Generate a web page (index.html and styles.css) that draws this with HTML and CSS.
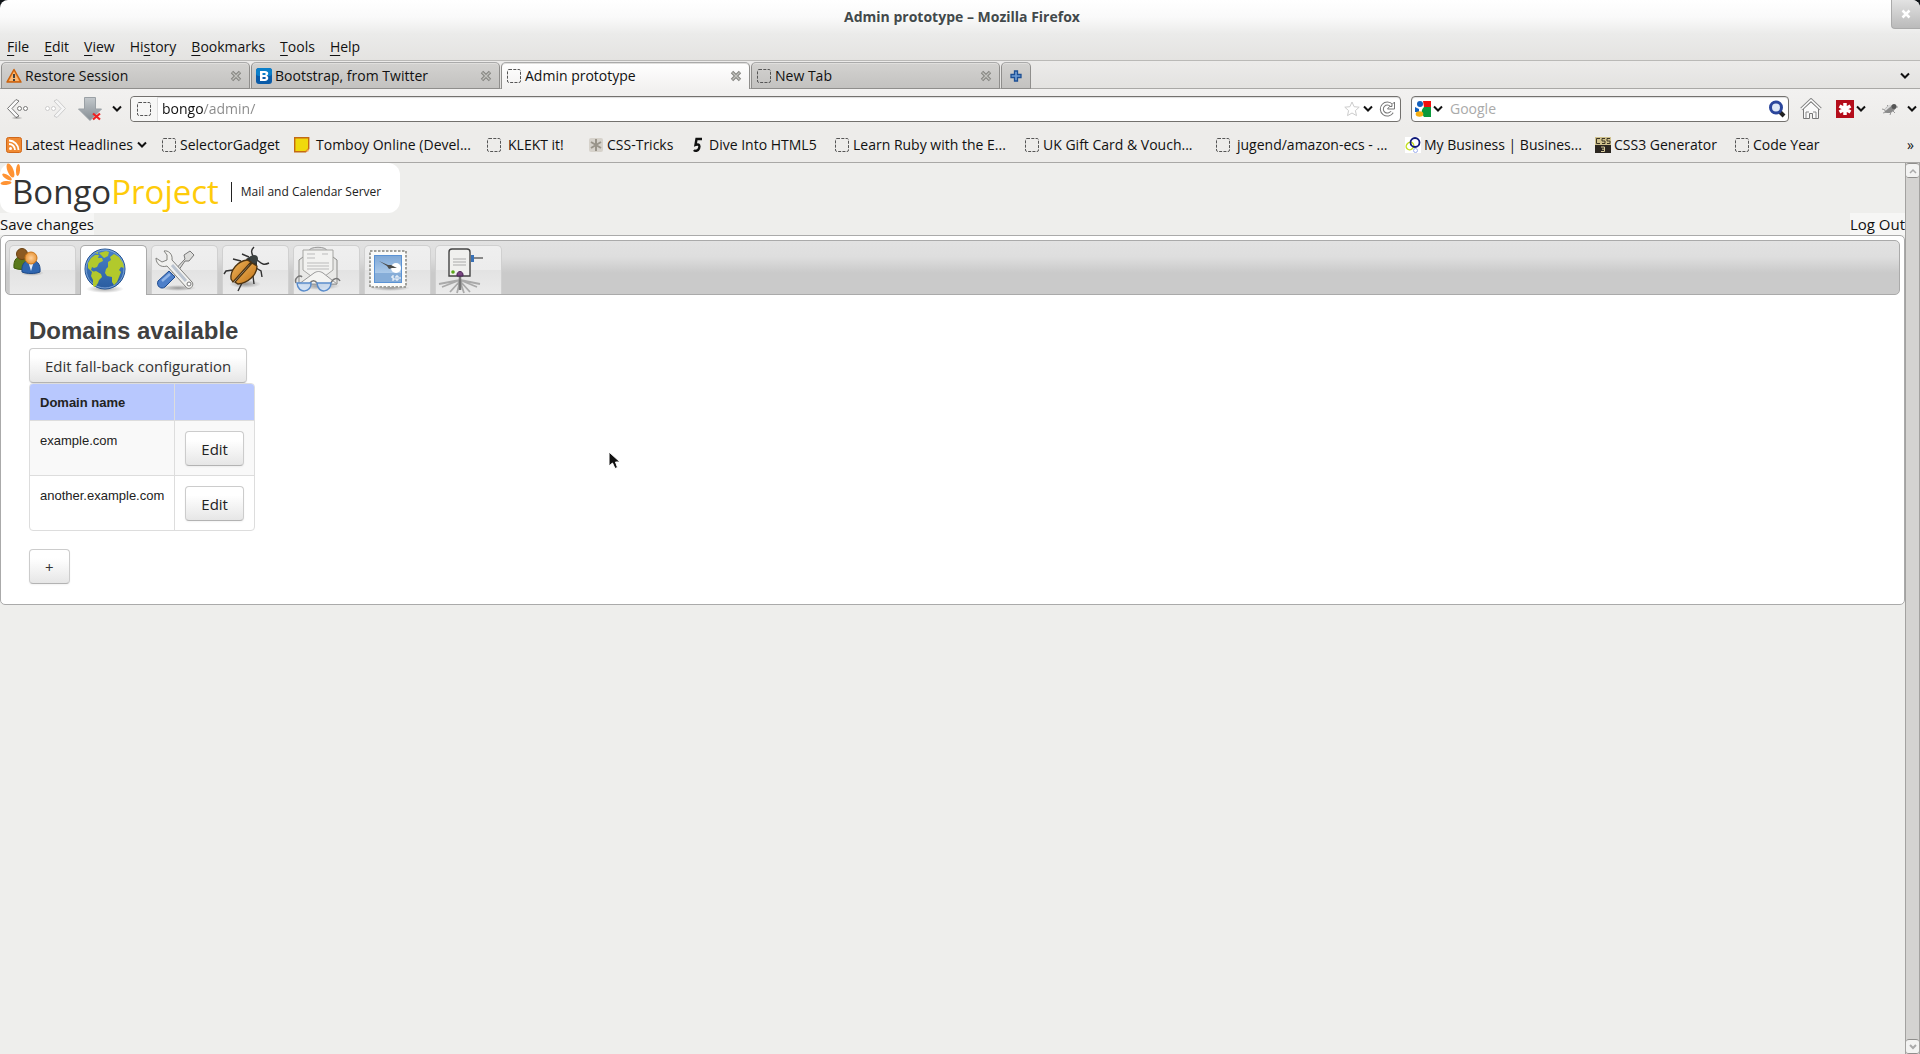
FILE: index.html
```html
<!DOCTYPE html>
<html lang="en">
<head>
<meta charset="utf-8">
<title>Admin prototype</title>
<link rel="stylesheet" href="styles.css">
</head>
<body>
<svg class="defs" width="0" height="0" aria-hidden="true">
  <defs>
    <linearGradient id="blue" x1="0" y1="0" x2="0" y2="1"><stop offset="0" stop-color="#4a83c8"/><stop offset="1" stop-color="#2a5c9f"/></linearGradient>
    <linearGradient id="orange" x1="0" y1="0" x2="1" y2="1"><stop offset="0" stop-color="#f0b860"/><stop offset="1" stop-color="#bf6f12"/></linearGradient>
    <linearGradient id="steel" x1="0" y1="0" x2="0" y2="1"><stop offset="0" stop-color="#c3c8cc"/><stop offset="1" stop-color="#858d93"/></linearGradient>
    <linearGradient id="sky" x1="0" y1="0" x2="0" y2="1"><stop offset="0" stop-color="#7fa8d6"/><stop offset="1" stop-color="#c2dbf3"/></linearGradient>
    <radialGradient id="head"><stop offset="0" stop-color="#ffd09a"/><stop offset="1" stop-color="#e8963a"/></radialGradient>
    <radialGradient id="shade"><stop offset="0" stop-color="#000" stop-opacity=".35"/><stop offset="1" stop-color="#000" stop-opacity="0"/></radialGradient>
  </defs>
  <symbol id="chevron" viewBox="0 0 12 8"><path d="M2 1.500l4 4 4-4" fill="none" stroke="#111" stroke-width="2"/></symbol>
  <symbol id="page" viewBox="0 0 16 16"><rect x="1.500" y="1.500" width="13" height="13" rx="1.500" fill="none" stroke="#555" stroke-dasharray="3 1.300"/></symbol>
  <symbol id="close" viewBox="0 0 12 12"><path d="M2 2l8 8m0-8l-8 8" stroke="#858580" stroke-width="3.400"/><path d="M2.500 2.500l7 7m0-7l-7 7" stroke="#c2c2be" stroke-width="1.300"/></symbol>
</svg>

<header class="titlebar">
  <h1>Admin prototype – Mozilla Firefox</h1>
  <button class="window-close" aria-label="Close window"><svg width="10" height="10" viewBox="0 0 10 10"><path d="M1.500 1.500l7 7m0-7l-7 7" stroke="#fff" stroke-width="2.500"/></svg></button>
</header>

<nav class="menubar" aria-label="Menu">
  <button><u>F</u>ile</button><button><u>E</u>dit</button><button><u>V</u>iew</button><button>Hi<u>s</u>tory</button><button><u>B</u>ookmarks</button><button><u>T</u>ools</button><button><u>H</u>elp</button>
</nav>

<div class="tabstrip">
  <div class="tab"><svg width="16" height="16" viewBox="0 0 16 16"><path d="M8 1.500L15 14H1z" fill="#f58a2c" stroke="#c9620f" stroke-width="1.500" stroke-linejoin="round"/><path d="M8 3.500L13 13H3z" fill="#fbb873"/><path d="M7 6h2v4H7zm0 5h2v2H7z" fill="#444"/></svg><span>Restore Session</span><button aria-label="Close tab"><svg width="12" height="12"><use href="#close"/></svg></button></div>
  <div class="tab"><svg width="16" height="16" viewBox="0 0 16 16"><rect width="16" height="16" rx="3" fill="#0a5ba8"/><rect width="16" height="8" rx="3" fill="#0b7fc9"/><path fill-rule="evenodd" d="M4 3h5c4 0 4 4 1.500 4.700C13.500 8.500 12.500 13 9 13H4zM6.500 5v2H9c1-.3 1-1.700 0-2zm0 4v2H9c1.300-.3 1.300-1.700 0-2z" fill="#fff"/></svg><span>Bootstrap, from Twitter</span><button aria-label="Close tab"><svg width="12" height="12"><use href="#close"/></svg></button></div>
  <div class="tab tab-active"><svg width="16" height="16"><use href="#page"/></svg><span>Admin prototype</span><button aria-label="Close tab"><svg width="12" height="12"><use href="#close"/></svg></button></div>
  <div class="tab"><svg width="16" height="16"><use href="#page"/></svg><span>New Tab</span><button aria-label="Close tab"><svg width="12" height="12"><use href="#close"/></svg></button></div>
  <button class="new-tab" aria-label="New tab"><svg width="12" height="12" viewBox="0 0 12 12"><path d="M4.500 1h3v3.500H11v3H7.500V11h-3V7.500H1v-3h3.500z" fill="#6d9bd4" stroke="#1d4f94" stroke-width="1.300"/></svg></button>
  <button class="all-tabs" aria-label="List all tabs"><svg width="12" height="8"><use href="#chevron"/></svg></button>
</div>

<div class="toolbar">
  <button class="tool back" aria-label="Back"><svg width="24" height="22" viewBox="0 0 24 22"><path d="M10 1.500L1.500 10.500 10 19.500l3-1.500-7-7.500L13 3z" fill="#fafafa" stroke="#777" stroke-linejoin="round"/><circle cx="13.500" cy="10.500" r="2" fill="#fff" stroke="#777"/><circle cx="19.500" cy="10.500" r="2" fill="#fff" stroke="#777"/><ellipse cx="11" cy="20" rx="6" ry="1.500" fill="url(#shade)"/></svg></button>
  <button class="tool forward" aria-label="Forward"><svg width="24" height="22" viewBox="0 0 24 22"><g transform="matrix(-1 0 0 1 24 0)"><path d="M10 1.500L1.500 10.500 10 19.500l3-1.500-7-7.500L13 3z" fill="#f5f5f5" stroke="#ccc" stroke-linejoin="round"/><circle cx="13.500" cy="10.500" r="2" fill="#fff" stroke="#ccc"/><circle cx="19.500" cy="10.500" r="2" fill="#fff" stroke="#ccc"/></g></svg></button>
  <button class="tool" aria-label="Downloads"><svg width="24" height="24" viewBox="0 0 24 24"><path d="M6.500.500h11V12h6L12 23.500.500 12h6z" fill="url(#steel)" stroke="#9aa0a5"/><path d="M15 16.500l7 6m0-6l-7 6" stroke="#e22" stroke-width="2.200"/></svg></button>
  <button class="tool drop" aria-label="Recent history"><svg width="12" height="8"><use href="#chevron"/></svg></button>
  <div class="field url">
    <span class="identity"><svg width="16" height="16"><use href="#page"/></svg></span>
    <input type="text" value="bongo/admin/" aria-label="Address">
    <button aria-label="Bookmark this page"><svg width="16" height="16" viewBox="0 0 16 16"><path d="M8 1l2.100 4.700 5.100.500-3.800 3.400 1.100 5L8 12l-4.500 2.600 1.100-5L.800 6.200l5.100-.5z" fill="#fff" stroke="#ccc"/></svg></button>
    <button aria-label="Show history"><svg width="12" height="8"><use href="#chevron"/></svg></button>
    <button class="reload" aria-label="Reload"><svg width="16" height="16" viewBox="0 0 16 16"><path d="M12.500 4.500A5.500 5.500 0 1 0 13 11" fill="none" stroke="#777" stroke-width="4"/><path d="M12.500 4.500A5.500 5.500 0 1 0 13 11" fill="none" stroke="#fff" stroke-width="2"/><path d="M15.500 1v7H8.500l2-2.500h2.500V3.500z" fill="#fff" stroke="#777"/></svg></button>
  </div>
  <div class="field search">
    <button class="engine" aria-label="Search engine"><svg width="16" height="16" viewBox="0 0 16 16"><path d="M8 0h8v6H9z" fill="#f00d0d"/><path d="M9 6h7v10H9c-3-4-3-7 0-10z" fill="#0b9a3b"/><circle cx="5" cy="3" r="3" fill="#1460bd"/><path d="M0 6l4 2v3H0z" fill="#1460bd"/><ellipse cx="4.500" cy="13" rx="3.800" ry="2.800" fill="#f6ae12"/></svg><svg width="12" height="8"><use href="#chevron"/></svg></button>
    <input type="text" placeholder="Google" aria-label="Search">
    <button aria-label="Search"><svg width="18" height="18" viewBox="0 0 18 18"><path d="M12 12l4 4" stroke="#222" stroke-width="4"/><circle cx="8" cy="7.500" r="5.500" fill="#dfe8f6" stroke="#2b469c" stroke-width="3"/></svg></button>
  </div>
  <button class="tool home" aria-label="Home"><svg width="22" height="22" viewBox="0 0 22 22"><path d="M3.500 10v10.500h6v-5h3v5h6V10L11 4z" fill="#fafafa" stroke="#777"/><path d="M1.500 11L11 2l9.500 9" fill="none" stroke="#888" stroke-width="3.500"/><path d="M1.500 11L11 2l9.500 9" fill="none" stroke="#fff" stroke-width="1.500"/><path d="M6 20v-6h3m4 0h3v6" fill="none" stroke="#888"/></svg></button>
  <button class="tool pass" aria-label="Password manager"><svg width="18" height="18" viewBox="0 0 18 18"><rect width="18" height="18" fill="#b40d1b"/><path d="M9 3v12M3.500 6l11 6m0-6l-11 6" stroke="#fff" stroke-width="3.500"/></svg><svg width="12" height="8"><use href="#chevron"/></svg></button>
  <button class="tool bug" aria-label="Firebug"><svg width="18" height="14" viewBox="0 0 18 14"><path d="M1 7l4 1M2 11l4-1M9 13l1-3M14 11l-2-2M17 5l-3 0M6 3l2 2" stroke="#999"/><ellipse cx="9" cy="7" rx="6" ry="3.500" transform="rotate(-25 9 7)" fill="#8a8a8a"/><circle cx="13" cy="4.500" r="2.500" fill="#555"/><path d="M4 8l6-5" stroke="#ddd" stroke-width="2"/></svg></button>
  <button class="tool" aria-label="More add-ons"><svg width="12" height="8"><use href="#chevron"/></svg></button>
</div>

<nav class="bookmarks" aria-label="Bookmarks toolbar">
  <a href="#"><svg width="16" height="16" viewBox="0 0 16 16"><rect x=".5" y=".5" width="15" height="15" rx="2" fill="#f08a33" stroke="#d0681a"/><circle cx="4.500" cy="11.500" r="1.500" fill="#fff"/><path d="M3 7a6 6 0 0 1 6 6M3 3.500A9.500 9.500 0 0 1 12.500 13" fill="none" stroke="#fff" stroke-width="1.800"/></svg>Latest Headlines<svg class="feed-drop" width="12" height="8"><use href="#chevron"/></svg></a>
  <a href="#"><svg width="16" height="16"><use href="#page"/></svg>SelectorGadget</a>
  <a href="#" class="spaced"><svg width="16" height="16" viewBox="0 0 16 16"><path d="M.7.7h14v11l-3 3H.7z" fill="#f0d90c" stroke="#c46a12" stroke-width="1.400"/><path d="M11.500 14.500l3-3v3z" fill="#f6a64a"/></svg>Tomboy Online (Devel...</a>
  <a href="#" class="spaced"><svg width="16" height="16"><use href="#page"/></svg>KLEKT it!</a>
  <a href="#"><svg width="16" height="16" viewBox="0 0 16 16"><rect x="1" y="1" width="14" height="14" rx="2" fill="#d6d2cb"/><path d="M8 2v12M3 5l10 6m0-6L3 11" stroke="#99948a" stroke-width="2"/></svg>CSS-Tricks</a>
  <a href="#"><svg width="16" height="16" viewBox="0 0 16 16"><path d="M12 2H6.500L5.500 8c4-1.500 4.500 1 3.500 3.500S5 14.500 4 13" fill="none" stroke="#111" stroke-width="2.400"/></svg>Dive Into HTML5</a>
  <a href="#"><svg width="16" height="16"><use href="#page"/></svg>Learn Ruby with the E...</a>
  <a href="#"><svg width="16" height="16"><use href="#page"/></svg>UK Gift Card &amp; Vouch...</a>
  <a href="#" class="spaced"><svg width="16" height="16"><use href="#page"/></svg>jugend/amazon-ecs - ...</a>
  <a href="#"><svg width="16" height="16" viewBox="0 0 16 16"><rect width="16" height="16" fill="#fff"/><ellipse cx="5" cy="9" rx="3.500" ry="4" transform="rotate(45 5 9)" fill="none" stroke="#c5e021" stroke-width="1.500"/><circle cx="10" cy="5.500" r="4.500" fill="none" stroke="#101a7a" stroke-width="1.800"/><circle cx="10.500" cy="13.500" r="2" fill="none" stroke="#9fb0ee"/></svg>My Business | Busines...</a>
  <a href="#"><svg width="16" height="16" viewBox="0 0 16 16"><rect width="16" height="8" fill="#cfc18d"/><rect y="8" width="16" height="8" fill="#2b2620"/><path d="M5 1.500H1.500v5H5M10 1.500H7v2.500h3v2.500H7M15 1.500h-3v2.500h3v2.500h-3" fill="none" stroke="#3b3524"/><path d="M6 10h3.500v4.500H6m1-2.300h2" fill="none" stroke="#d8cc9d"/></svg>CSS3 Generator</a>
  <a href="#"><svg width="16" height="16"><use href="#page"/></svg>Code Year</a>
  <button class="overflow" aria-label="More bookmarks">»</button>
</nav>

<div class="viewport">
  <main>
    <div class="brand">
      <svg class="petals" width="22" height="24" viewBox="0 0 22 24" aria-hidden="true"><g fill="#ff9333"><ellipse cx="10.500" cy="7.500" rx="3" ry="7.500" transform="rotate(-22 10.500 7.500)"/><ellipse cx="18" cy="7" rx="2" ry="6" transform="rotate(4 18 7)"/><ellipse cx="7" cy="14" rx="5.500" ry="2" transform="rotate(32 7 14)"/><ellipse cx="6" cy="20" rx="5.500" ry="2" transform="rotate(-5 6 20)"/></g></svg>
      <span class="wordmark">Bongo<b>Project</b></span><span class="tagline">Mail and Calendar Server</span>
    </div>
    <div class="actions"><a href="#">Save changes</a><a href="#">Log Out</a></div>

    <section class="panel">
      <nav class="sections" aria-label="Sections">
        <a href="#" aria-label="Users"><svg width="48" height="48" viewBox="0 0 48 48"><ellipse cx="22" cy="27" rx="12" ry="3" fill="url(#shade)"/><path d="M4 22c-1-9 4-12 8-12s8 3 8 12c-4 2-12 2-16 0z" fill="#5a7a1c" stroke="#3f5a0c"/><circle cx="12" cy="8" r="5.500" fill="#8b5a22" stroke="#6b4210"/><path d="M12 26c-1-9 4-12 9-12s10 3 9 12c-5 2-13 2-18 0z" fill="#2f66b0" stroke="#1f4a87"/><path d="M18 15h6l-3 10z" fill="#e8eef6"/><circle cx="21" cy="12" r="6" fill="url(#head)" stroke="#c9761d"/></svg></a>
        <a href="#" class="current" aria-label="Domains"><svg width="48" height="48" viewBox="0 0 48 48"><ellipse cx="24" cy="43" rx="19" ry="4" fill="url(#shade)"/><circle cx="24" cy="23" r="20" fill="url(#blue)" stroke="#20508f"/><circle cx="24" cy="23" r="19" fill="none" stroke="#8fb4e4" stroke-width=".8"/><path d="M7 17l3-5 4-3 4 0-1 3 4 0 1 3-4 2-2 4-3 1-2-1-1 3 3 2-2 0-4-4zM11 26l4-1 5 3 1 3-3 3-1 3-3 4-2-1 0-6-2-4zM18 7l7-2 3 1-1 4-4 2-2-2zM27 21l0-5 3-2-1-3 4-3 5 3 4 6 1 5-3-1-2 3 2 2-2 5-2 5-3 3-2-3 0-5-5-1-2-3 1-4zM14 7l3-1 0 2z" fill="#b2c92c"/></svg></a>
        <a href="#" aria-label="Tools"><svg width="48" height="48" viewBox="0 0 48 48"><ellipse cx="26" cy="42" rx="18" ry="3" fill="url(#shade)"/><path d="M19 28L33 13l-1-4 6-4 4 4-5 6-4 0L22 31z" fill="#dcdcda" stroke="#777"/><path d="M17 25l6 6-10 10c-4 3-9-1-7-6z" fill="#4d7fc9" stroke="#1d4a90"/><path d="M10 35l8-7" stroke="#8fb4e8" stroke-width="2.500"/><path d="M12 5c4-1 9 3 8 9l20 22c3 4-3 9-6 5L15 20C9 22 4 18 4 12l6 4 5-2 0-5z" fill="#f1f1ef" stroke="#82827f"/><path d="M20 19l14 16" stroke="#bbc4d0" stroke-width="3"/><circle cx="37" cy="38" r="2" fill="#fff" stroke="#777"/></svg></a>
        <a href="#" aria-label="Bugs"><svg width="48" height="48" viewBox="0 0 48 48"><ellipse cx="22" cy="38" rx="16" ry="4" fill="url(#shade)"/><path d="M30 10c-2-4-2-6 1-9M34 14c4 3 6 6 12 3M18 15l-8-2M10 24l-7 1-2 3M33 22l5 3 1 6M30 30l1 8M19 37l-4 8M26 11l-7-3" fill="none" stroke="#333" stroke-width="1.400"/><path d="M23 13l5-3 6 4 0 6-6 1z" fill="#2f3433"/><circle cx="31" cy="13" r="4" fill="#3b4140"/><path d="M24 14C15 15 7 24 8 33l2 3 18-20z" fill="url(#orange)" stroke="#4d3310" stroke-width="1.300"/><path d="M29 17L12 36l3 2c10-1 19-9 19-18z" fill="url(#orange)" stroke="#4d3310" stroke-width="1.300"/></svg></a>
        <a href="#" aria-label="Mail aliases"><svg width="48" height="48" viewBox="0 0 48 48"><ellipse cx="26" cy="40" rx="20" ry="4" fill="url(#shade)"/><path d="M15 5c0-5 18-5 18 0" fill="#ddd" stroke="#999"/><path d="M5 14l4-3h30l4 3v24H5z" fill="#e9e9e7" stroke="#8b8b88"/><path d="M9 4h30v20l-8 6H17l-8-6z" fill="#f2f2f0" stroke="#a5a5a2"/><path d="M13 8h8M13 12h8M13 17h22M13 20h22M13 23h22M28 8h6" stroke="#bbb"/><path d="M5 38l15-11c3-2 6-2 9 0l14 11z" fill="#f4f4f2" stroke="#999"/><path d="M2 37c-2-5 4-9 6-6M46 35c-2-4-7-3-9 2M16 37c2-3 5-3 7 0" fill="none" stroke="#777" stroke-width="1.500"/><path d="M3 37h14c1 9-13 12-14 0zM23 37h14c0 9-13 12-14 0z" fill="#cfe1f6" fill-opacity=".85" stroke="#5a8ccb" stroke-width="1.500"/></svg></a>
        <a href="#" aria-label="Mail"><svg width="48" height="48" viewBox="0 0 48 48"><ellipse cx="25" cy="42" rx="20" ry="3" fill="url(#shade)"/><rect x="5" y="5" width="36" height="36" fill="#fbfbf9" stroke="#a0a09b" stroke-width="2" stroke-dasharray="2.500 1.500"/><rect x="9.500" y="9.500" width="27" height="27" fill="url(#sky)" stroke="#5a92d4"/><circle cx="31" cy="22" r="5" fill="#fff"/><path d="M10 27h26v9H10z" fill="#86add8"/><path d="M14 15l9 4 3 0 6 3-5 0-3 1-2-3z" fill="#4c4c4a"/><path d="M29 30h-2v2h2v2h-2M31 30h2v4h-2zM34 32h2" fill="none" stroke="#fff"/></svg></a>
        <a href="#" aria-label="Queue"><svg width="48" height="48" viewBox="0 0 48 48"><path d="M24 34L6 41M24 34L3 38M24 35L14 46M24 35L21 47M24 35l4 12M24 35l10 11M24 34l17 7M24 34l20 4" fill="none" stroke="#aaa" stroke-width="1.800"/><path d="M24 28v16" stroke="#777" stroke-width="2.500"/><path d="M36 12h11" stroke="#888" stroke-width="2"/><path d="M35 9h3v7h-3z" fill="#3972b8"/><path d="M16 3h15c2 0 3 1 3 3v24H13V6c0-2 1-3 3-3z" fill="#f0f0ee" stroke="#444" stroke-width="1.400"/><path d="M17 13h13M17 16h13M17 19h13" stroke="#aaa"/><circle cx="17" cy="26" r="1.800" fill="#58a518"/><path d="M21 30c-1-6 7-6 6 0z" fill="#7a4782" stroke="#4b2456"/></svg></a>
      </nav>
      <div class="content">
        <h2>Domains available</h2>
        <button class="btn">Edit fall-back configuration</button>
        <table>
          <thead><tr><th scope="col">Domain name</th><th></th></tr></thead>
          <tbody>
            <tr><td>example.com</td><td><button class="btn">Edit</button></td></tr>
            <tr><td>another.example.com</td><td><button class="btn">Edit</button></td></tr>
          </tbody>
        </table>
        <button class="btn" aria-label="Add domain">+</button>
      </div>
    </section>
  </main>
  <div class="scrollbar">
    <button aria-label="Scroll up"><svg width="8" height="6" viewBox="0 0 8 6"><path d="M1 5l3-3 3 3" fill="none" stroke="#aaa" stroke-width="1.500"/></svg></button>
    <button aria-label="Scroll down"><svg width="8" height="6" viewBox="0 0 8 6"><path d="M1 1l3 3 3-3" fill="none" stroke="#aaa" stroke-width="2"/></svg></button>
  </div>
</div>
<svg class="pointer" width="13" height="19" viewBox="0 0 13 19" aria-hidden="true"><path d="M1 1v14l3.500-3L7 17.500l2.500-1L7.500 11H12z" fill="#111" stroke="#fff"/></svg>
</body>
</html>
```
FILE: styles.css
```css
* { box-sizing: border-box; }

body {
  margin: 0;
  min-height: 100vh;
  display: flex;
  flex-direction: column;
  background: #eeeeec;
  color: #111;
  font: 14px/20px "Open Sans", "Noto Sans", sans-serif;
}

button {
  margin: 0;
  padding: 0;
  border: 0;
  background: none;
  color: inherit;
  font: inherit;
  display: flex;
  align-items: center;
  justify-content: center;
}

a { color: inherit; text-decoration: none; }
svg { display: block; flex: none; }
.defs { position: absolute; }

/* Window chrome */
.titlebar {
  position: relative;
  height: 34px;
  display: flex;
  justify-content: center;
  background: linear-gradient(#101418 12px, #ebebea 12px);
}
.titlebar h1 {
  flex: 1;
  margin: 0;
  padding: 6px 0 0 4px;
  border-radius: 8px 8px 0 0;
  background: linear-gradient(#fff, #fafafa 50%, #ebebea);
  color: #42494b;
  font-size: 14px;
  line-height: 22px;
  text-align: center;
}
.window-close {
  position: absolute;
  top: 0;
  right: 0;
  width: 29px;
  height: 29px;
  border: 1px solid #aaa;
  border-width: 0 0 1px 1px;
  border-radius: 0 8px 0 4px;
  background: linear-gradient(#e2e2e2, #bababa);
}

.menubar {
  height: 27px;
  padding: 3px 7px;
  display: flex;
  gap: 15px;
  border-bottom: 1px solid #bab9b7;
  background: linear-gradient(#ebebea, #e4e3e1);
}
.menubar u { text-decoration-thickness: 1px; text-underline-offset: 3px; }

.tabstrip {
  height: 28px;
  padding: 1px 1px 0;
  display: flex;
  background: linear-gradient(#ecebea, #e3e2e0);
  box-shadow: inset 0 -1px #a9a8a6;
}
.tab, .new-tab {
  border: 1px solid #8f8e8c;
  border-top-color: #aaa;
  border-radius: 5px 5px 0 0;
  background: linear-gradient(#d3d2d0, #c3c2c0);
  box-shadow: inset 0 1px #e0dfdd;
}
.tab {
  width: 249px;
  margin-right: 1px;
  padding: 0 7px 0 4px;
  display: flex;
  align-items: center;
  gap: 3px;
}
.tab span { flex: 1; }
.tab-active {
  border-bottom: 0;
  background: linear-gradient(#fff, #f2f1f0);
}
.new-tab { width: 30px; }
.all-tabs { margin-left: auto; padding: 0 8px; }

.toolbar {
  height: 39px;
  padding: 7px 2px 6px 6px;
  display: flex;
  align-items: center;
  background: linear-gradient(#f2f1f0, #edecea);
}
.back { margin-right: 13px; }
.forward { margin-right: 11px; }
.drop { margin: 0 7px 0 9px; }
.field {
  height: 26px;
  display: flex;
  align-items: center;
  border: 1px solid #73716e;
  border-radius: 4px;
  background: #fff;
  box-shadow: inset 0 1px 1px #ddd;
}
.field input {
  flex: 1;
  min-width: 0;
  padding: 0;
  border: 0;
  outline: 0;
  background: none;
  font: inherit;
}
.url { flex: 1; margin-right: 10px; padding-right: 5px; gap: 2px; }
.url .reload { margin-left: 3px; }
/* The host name is darker than the path that follows it */
.url input {
  padding-left: 2px;
  background: linear-gradient(to right, #111 43px, #888 43px);
  -webkit-background-clip: text;
  background-clip: text;
  color: transparent;
}
.identity {
  height: 100%;
  padding: 4px 5px;
  border-right: 1px solid #ddd;
  background: #f7f7f6;
  border-radius: 4px 0 0 4px;
}
.search { width: 378px; padding: 0 2px 0 3px; }
.engine { gap: 1px; margin-right: 6px; }
.search input::placeholder { color: #aaa; opacity: 1; }
.home { margin: 0 14px 0 11px; }
.pass { gap: 1px; margin-right: 14px; }
.bug { margin-right: 7px; }

.bookmarks {
  height: 35px;
  padding: 0 6px 0 6px;
  display: grid;
  grid-template-columns: 155px 133px 192px 102px 102px 144px 190px 191px 190px 190px 139px 100px 1fr;
  align-items: center;
  border-bottom: 1px solid #a9a8a6;
  background: #edecea;
  white-space: nowrap;
}
.bookmarks a { display: flex; align-items: center; gap: 3px; }
.bookmarks .spaced { gap: 6px; }
.overflow { justify-self: end; }

/* Page */
.viewport { flex: 1; display: flex; }
main { flex: 1; min-width: 0; font-size: 15px; }

.brand {
  position: relative;
  width: 400px;
  height: 50px;
  padding-left: 12px;
  display: flex;
  align-items: center;
  border-radius: 12px;
  background: #fff;
}
.petals { position: absolute; left: 0; top: 0; }
.wordmark {
  color: #333;
  font-size: 33px;
  line-height: 48px;
  padding-top: 8px;
}
.wordmark b { color: #fecb0a; font-weight: 400; }
.tagline {
  margin: 8px 0 0 12px;
  padding-left: 9px;
  border-left: 1px solid #222;
  color: #222;
  font-size: 12px;
}

.actions { height: 22px; display: flex; justify-content: space-between; }
.actions a { background: #f6f6f5; line-height: 22px; }

.panel {
  padding: 4px;
  border: 1px solid #aaa;
  border-radius: 5px;
  background: #fff;
}
.sections {
  height: 55px;
  padding: 4px 3px 0;
  display: flex;
  gap: 4px;
  border: 1px solid #aaa;
  border-radius: 5px;
  background: linear-gradient(#e2e2e2, #dedede 30%, #cacaca 60%, #cacaca);
}
.sections a {
  width: 67px;
  border: 1px solid #d0d0d0;
  border-bottom: 0;
  border-radius: 5px 5px 0 0;
  background: linear-gradient(#efefef, #ececec 50%, #e3e3e3 51%, #ebebeb);
}
.sections .current {
  margin-bottom: -1px;
  border-color: #aaa;
  background: #fff;
}

.content { padding: 20px 24px 16px; color: #333; }
h2 {
  margin: 0 0 1px;
  color: #404040;
  font: bold 24px/32px "Liberation Sans", sans-serif;
}
.btn {
  height: 35px;
  padding: 0 15px;
  border: 1px solid #ccc;
  border-bottom-color: #b3b3b3;
  border-radius: 4px;
  background: linear-gradient(#fff 25%, #e6e6e6);
  box-shadow: 0 1px 2px rgba(0, 0, 0, .05);
  font: 15px/20px "Open Sans", "Noto Sans", sans-serif;
}
table {
  margin-bottom: 18px;
  border: 1px solid #ddd;
  border-collapse: separate;
  border-spacing: 0;
  border-radius: 4px;
  overflow: hidden;
  color: #222;
  font: 13px/20px "Liberation Sans", sans-serif;
}
th, td { padding: 10px 10px 9px; text-align: left; vertical-align: top; }
th { background: #b8c8fe; height: 36px; padding: 9px 10px 7px; }
td { border-top: 1px solid #ddd; }
th + th, td + td { border-left: 1px solid #ddd; }
tbody tr:first-child { background: #f9f9f9; }

.scrollbar {
  width: 15px;
  display: flex;
  flex-direction: column;
  justify-content: space-between;
  border: 1px solid #a3a2a0;
  border-width: 0 1px;
  background: #d4d3d1;
}
.scrollbar button {
  height: 15px;
  border: 1px solid #8f8e8c;
  border-width: 1px 0;
  border-radius: 3px;
  background: #f3f3f2;
}

.pointer { position: absolute; left: 608px; top: 451px; }
```
